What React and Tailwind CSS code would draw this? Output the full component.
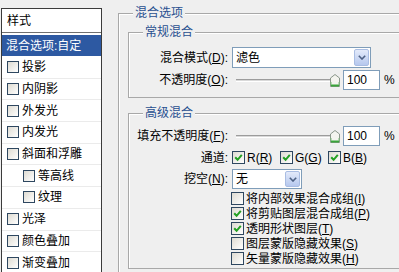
import React from "react";

const styleRows = [
  { label: "投影" },
  { label: "内阴影" },
  { label: "外发光" },
  { label: "内发光" },
  { label: "斜面和浮雕" },
  { label: "等高线", sub: true },
  { label: "纹理", sub: true },
  { label: "光泽" },
  { label: "颜色叠加" },
  { label: "渐变叠加" },
];

const Check = ({ checked, small }) => (
  <span
    className={`flex shrink-0 items-center justify-center border border-[#2e4760] bg-gradient-to-br from-[#dedbd2] to-white ${
      small ? "h-[12px] w-[12px]" : "h-[13px] w-[13px]"
    }`}
  >
    {checked && (
      <svg width="9" height="9" viewBox="0 0 9 9">
        <path d="M1.2 4.2 L3.6 6.8 L7.8 1.8" fill="none" stroke="#23a023" strokeWidth="2" />
      </svg>
    )}
  </span>
);

const Select = ({ value, className }) => (
  <div className={`flex items-stretch border border-[#7f9db9] bg-white ${className}`}>
    <span className="flex flex-1 items-center pl-[3px]">{value}</span>
    <span className="m-[1px] flex w-[15px] items-center justify-center rounded-[2px] border border-[#a9bde3] bg-gradient-to-b from-[#e3eafa] to-[#b6c8ee]">
      <svg width="8" height="5" viewBox="0 0 8 5">
        <path d="M0.8 0.8 L4 4 L7.2 0.8" fill="none" stroke="#4d6185" strokeWidth="1.6" />
      </svg>
    </span>
  </div>
);

const Slider = () => (
  <div className="relative h-[20px] w-[108px] pl-[4px] pt-[9px]">
    <div className="h-[3px] w-[100px] border-t border-b border-t-[#9c9c9c] border-b-white bg-[#d9d9d9]" />
    {/* thumb */}
    <svg className="absolute left-[98px] top-[4px]" width="10" height="13" viewBox="0 0 10 13">
      <path d="M0.5 4 L5 0.5 L9.5 4 V12.5 H0.5 Z" fill="#f4f4ef" stroke="#8a968a" />
      <path d="M1 11.5 H9" stroke="#3aa53a" strokeWidth="2" />
      <path d="M1 8 V11 M9 8 V11" stroke="#7cc07c" strokeWidth="1" />
    </svg>
  </div>
);

const Field = ({ value }) => (
  <div className="flex h-[20px] w-[37px] items-center border border-[#7f9db9] bg-white pl-[3px]">
    {value}
  </div>
);

const Label = ({ children }) => (
  <div className="w-[99px] shrink-0 text-right">{children}</div>
);

const GroupTitle = ({ children }) => (
  <div className="-mt-[8px] ml-[14px] w-fit bg-[#efefef] px-[2px] text-[#29508f]">{children}</div>
);

const OpacityRow = ({ label, className }) => (
  <div className={`flex h-[20px] items-center ${className}`}>
    <Label>{label}</Label>
    <div className="ml-[4px] flex items-center">
      <Slider />
      <div className="ml-[3px]">
        <Field value="100" />
      </div>
      <span className="ml-[4px]">%</span>
    </div>
  </div>
);

const options = [
  { text: "将内部效果混合成组", key: "I", checked: false },
  { text: "将剪贴图层混合成组", key: "P", checked: true },
  { text: "透明形状图层", key: "T", checked: true },
  { text: "图层蒙版隐藏效果", key: "S", checked: false },
  { text: "矢量蒙版隐藏效果", key: "H", checked: false },
];

export default function App() {
  return (
    <div className="flex h-[272px] w-[399px] overflow-hidden bg-[#efefef] font-['Liberation_Sans','Noto_Sans_CJK_SC',sans-serif] text-[12px] leading-[14px] text-black">
      {/* Styles list */}
      <div className="ml-[1px] mt-[8px] h-[280px] w-[101px] shrink-0 border border-[#3b3b3b] bg-white">
        <div className="flex h-[24px] items-center border-b border-[#707070] pl-[5px]">样式</div>
        <div className="mt-[2px] flex h-[21px] items-center bg-[#2d59a2] pl-[4px] text-white">
          混合选项:自定
        </div>
        <div className="mt-[1px]">
          {styleRows.map((r) => (
            <div
              key={r.label}
              className={`flex h-[21.7px] items-center gap-[3px] border-b border-[#ebebeb] ${
                r.sub ? "pl-[21px]" : "pl-[5px]"
              }`}
            >
              <Check small />
              <span>{r.label}</span>
            </div>
          ))}
        </div>
      </div>

      {/* Blending options */}
      <div className="ml-[16px] mt-[13px] h-[300px] w-[300px] shrink-0 border border-[#a8a8a8] shadow-[inset_1px_1px_0_#fff]">
        <GroupTitle>混合选项</GroupTitle>

        {/* General blending */}
        <div className="ml-[9px] mt-[12px] w-[300px] border border-[#a8a8a8] pb-[7px] shadow-[inset_1px_1px_0_#fff]">
          <GroupTitle>常规混合</GroupTitle>
          <div className="mt-[8px] flex h-[21px] items-center">
            <Label>
              混合模式(<u>D</u>):
            </Label>
            <Select value="滤色" className="ml-[4px] h-[21px] w-[139px]" />
          </div>
          <OpacityRow
            className="mt-[2px]"
            label={
              <>
                不透明度(<u>O</u>):
              </>
            }
          />
        </div>

        {/* Advanced blending */}
        <div className="ml-[9px] mt-[15px] w-[300px] border border-[#a8a8a8] pb-[2px] shadow-[inset_1px_1px_0_#fff]">
          <GroupTitle>高级混合</GroupTitle>
          <OpacityRow
            className="mt-[6px]"
            label={
              <>
                填充不透明度(<u>F</u>):
              </>
            }
          />
          <div className="mt-[5px] flex h-[13px] items-center">
            <Label>通道:</Label>
            <div className="ml-[4px] flex items-center">
              <div className="flex w-[48px] items-center gap-[2px]">
                <Check checked />
                <span>
                  R(<u>R</u>)
                </span>
              </div>
              <div className="flex w-[48px] items-center gap-[2px]">
                <Check checked />
                <span>
                  G(<u>G</u>)
                </span>
              </div>
              <div className="flex items-center gap-[2px]">
                <Check checked />
                <span>
                  B(<u>B</u>)
                </span>
              </div>
            </div>
          </div>
          <div className="mt-[5px] flex h-[20px] items-center">
            <Label>
              挖空(<u>N</u>):
            </Label>
            <Select value="无" className="ml-[4px] h-[20px] w-[70px]" />
          </div>
          <div className="mt-[2px] pl-[102px]">
            {options.map((o) => (
              <div key={o.key} className="flex h-[15px] items-center gap-[2px]">
                <Check checked={o.checked} />
                <span>
                  {o.text}(<u>{o.key}</u>)
                </span>
              </div>
            ))}
          </div>
        </div>
      </div>
    </div>
  );
}
